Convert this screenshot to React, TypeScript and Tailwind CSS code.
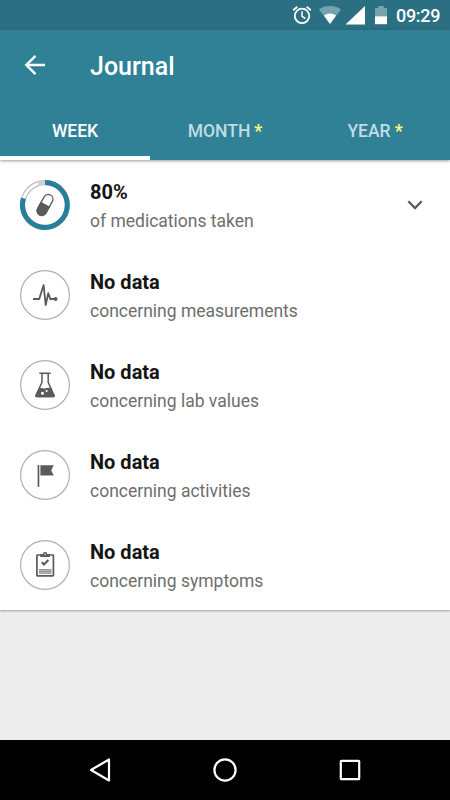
import clsx from "clsx";
import type { ReactNode } from "react";

function StatusBar() {
  return (
    <div className="flex h-[30px] shrink-0 items-center justify-end bg-[#2b7082] pr-[10px] text-white">
      <svg width="104" height="30" viewBox="0 0 104 30" className="mr-1">
        <g fill="none" stroke="currentColor" strokeWidth="1.8">
          <circle cx="14" cy="15.9" r="7.2" />
          <path d="M14 11.3v5l3.4 2.2" strokeWidth="1.5" />
          <path d="M5.2 10.2l4.1-3.5M22.8 10.2l-4.1-3.5" />
        </g>
        <path
          d="M31 9.4C37.4 5 46.6 5 53 9.4L42 24z"
          fill="currentColor"
          opacity="0.35"
        />
        <path d="M35.9 15.6c3.6-2.8 8.6-2.8 12.2 0L42 24z" fill="currentColor" />
        <path d="M57.5 24.5H77V6z" fill="currentColor" />
        <path
          d="M87 8h3.2V6h5.6v2H99v8.5H87z"
          fill="currentColor"
          opacity="0.35"
        />
        <path d="M87 16.3h12v7.9H87z" fill="currentColor" />
      </svg>
      <span className="w-[44px] pt-[2px] text-[18px] leading-none font-medium tracking-[-0.3px]">
        09:29
      </span>
    </div>
  );
}

function IconCircle({ children }: { children: ReactNode }) {
  return (
    <svg
      width="50"
      height="50"
      viewBox="0 0 50 50"
      className="shrink-0 text-[#5a5a5a]"
    >
      <circle cx="25" cy="25" r="24.4" fill="none" stroke="#b0b0b0" strokeWidth="1.2" />
      {children}
    </svg>
  );
}

function MedicationIcon() {
  return (
    <svg
      width="50"
      height="50"
      viewBox="0 0 50 50"
      className="shrink-0 text-[#5a5a5a]"
    >
      <g fill="none">
        <circle cx="25" cy="25" r="24.4" stroke="#bcbcbc" strokeWidth="1.1" />
        <circle cx="25" cy="25" r="20.4" stroke="#bcbcbc" strokeWidth="1.1" />
        <path d="M17.8 3.8A22.4 22.4 0 0 1 25 2.6" stroke="#d3d3d3" strokeWidth="4.8" />
        <path
          d="M25 2.6A22.4 22.4 0 1 1 3.5 18.3"
          stroke="#26809a"
          strokeWidth="5"
        />
      </g>
      <g transform="rotate(29 25 25)">
        <rect
          x="20.3"
          y="13.6"
          width="9.4"
          height="22.8"
          rx="4.7"
          fill="white"
          stroke="currentColor"
          strokeWidth="1.3"
        />
        <path d="M19.7 24.2h10.600v7.300a5.300 5.300 0 0 1-10.600 0z" fill="currentColor" />
      </g>
    </svg>
  );
}

function MeasurementIcon() {
  return (
    <IconCircle>
      <path
        d="M13 29h6.2L23.6 15l2.1 20 2.6-11.8 2 5.8H36"
        fill="none"
        stroke="currentColor"
        strokeWidth="1.8"
        strokeLinejoin="round"
      />
      <circle cx="35.6" cy="29" r="1.9" fill="currentColor" />
    </IconCircle>
  );
}

function LabIcon() {
  return (
    <IconCircle>
      <path
        d="M19.3 13.3h11.4M22 13.5v8.8L16 35.2c-.3.8 0 1.3.8 1.3h16.4c.8 0 1.1-.5.8-1.3L28.2 22.3V13.5"
        fill="none"
        stroke="currentColor"
        strokeWidth="1.5"
      />
      <path
        d="M19 28.3c2.2-.8 4 .6 6 .1s4-1 6-.1l3.6 7.5c.3.8-.1 1.4-1 1.4H16.4c-.9 0-1.3-.6-1-1.4z"
        fill="currentColor"
      />
      <circle cx="22.5" cy="33.2" r="1.5" fill="white" />
      <circle cx="26.6" cy="31" r="1.1" fill="white" />
    </IconCircle>
  );
}

function ActivityIcon() {
  return (
    <IconCircle>
      <path d="M17.6 15h1.7v21.8h-1.7z" fill="currentColor" />
      <path d="M20.4 15.2h13.400l-2.600 5.200 2.600 5.200H20.400z" fill="currentColor" />
    </IconCircle>
  );
}

function SymptomIcon() {
  return (
    <IconCircle>
      <rect
        x="16.9"
        y="15"
        width="16.5"
        height="20.8"
        rx="0.6"
        fill="none"
        stroke="currentColor"
        strokeWidth="1.7"
      />
      <path d="M20.2 16.9v-2.600h2.600a2.300 2.300 0 0 1 4.600 0H30v2.600z" fill="currentColor" />
      <circle cx="25.1" cy="14.2" r="0.8" fill="white" />
      <path
        d="M21.800 22.300l2.200 2.300 4.400-4.600"
        fill="none"
        stroke="currentColor"
        strokeWidth="2.1"
      />
      <path d="M18.900 29h12.600v4.700H18.900z" fill="currentColor" opacity="0.45" />
      <path
        d="M18.900 29.500h12.600M18.900 31.500h12.600M18.900 33.500h12.600"
        stroke="currentColor"
        strokeWidth="0.7"
        opacity="0.5"
      />
    </IconCircle>
  );
}

const TABS = [
  { label: "WEEK", active: true },
  { label: "MONTH", premium: true },
  { label: "YEAR", premium: true },
];

const ENTRIES = [
  {
    title: "80%",
    text: "of medications taken",
    icon: <MedicationIcon />,
    expandable: true,
  },
  {
    title: "No data",
    text: "concerning measurements",
    icon: <MeasurementIcon />,
  },
  { title: "No data", text: "concerning lab values", icon: <LabIcon /> },
  { title: "No data", text: "concerning activities", icon: <ActivityIcon /> },
  { title: "No data", text: "concerning symptoms", icon: <SymptomIcon /> },
];

function Header() {
  return (
    <header className="z-10 flex h-[130px] shrink-0 flex-col bg-[#308196] text-white shadow-[0_1px_3px_rgba(0,0,0,0.4)]">
      <div className="flex h-[72px] items-center pl-6">
        <svg width="22" height="22" viewBox="0 0 22 22" className="mb-[2px]">
          <path
            d="M21 11H2.5M11.5 1.8L2.3 11l9.2 9.2"
            fill="none"
            stroke="currentColor"
            strokeWidth="2.4"
          />
        </svg>
        <h1 className="ml-11 pt-[2px] text-[25px] leading-[30px] font-medium">
          Journal
        </h1>
      </div>
      <nav className="flex flex-1">
        {TABS.map((tab) => (
          <button
            key={tab.label}
            className={clsx(
              "flex flex-1 items-center justify-center border-b-4 pt-1 text-[17.5px] font-medium",
              tab.active
                ? "border-white text-white"
                : "border-transparent text-[#c0dce4]",
            )}
          >
            {tab.label}
            {tab.premium && (
              <span className="ml-1 font-bold text-[#f8f97c]">*</span>
            )}
          </button>
        ))}
      </nav>
    </header>
  );
}

export default function App() {
  return (
    <div className="flex h-[800px] w-[450px] flex-col overflow-hidden bg-[#ededed] font-['Roboto',sans-serif]">
      <StatusBar />
      <Header />
      <main className="flex-1">
        <ul className="bg-white shadow-[0_1px_2px_rgba(0,0,0,0.35)]">
          {ENTRIES.map((entry) => (
            <li key={entry.text} className="flex h-[90px] items-center px-5">
              {entry.icon}
              <div className="ml-5 flex-1 pt-1">
                <div className="text-[20px] leading-[28px] font-bold text-[#151515]">
                  {entry.title}
                </div>
                <div className="text-[17.5px] leading-[30px] text-[#6e6e6e]">
                  {entry.text}
                </div>
              </div>
              {entry.expandable && (
                <svg width="16" height="10" viewBox="0 0 16 10" className="mr-[7px]">
                  <path
                    d="M1.3 1.3L8 8l6.7-6.7"
                    fill="none"
                    stroke="#5a5a5a"
                    strokeWidth="2.3"
                  />
                </svg>
              )}
            </li>
          ))}
        </ul>
      </main>
      <footer className="flex h-[60px] shrink-0 items-center justify-between bg-black px-[88px] text-white">
        <svg width="24" height="26" viewBox="0 0 24 26" fill="none" stroke="currentColor" strokeWidth="2.2">
          <path d="M21 2.5v21L3 13z" strokeLinejoin="round" />
        </svg>
        <svg width="24" height="24" viewBox="0 0 24 24" fill="none" stroke="currentColor" strokeWidth="2.2">
          <circle cx="12" cy="12" r="10.6" />
        </svg>
        <svg width="24" height="24" viewBox="0 0 24 24" fill="none" stroke="currentColor" strokeWidth="2.2">
          <rect x="2.8" y="2.8" width="18.4" height="18.4" rx="0.5" />
        </svg>
      </footer>
    </div>
  );
}
